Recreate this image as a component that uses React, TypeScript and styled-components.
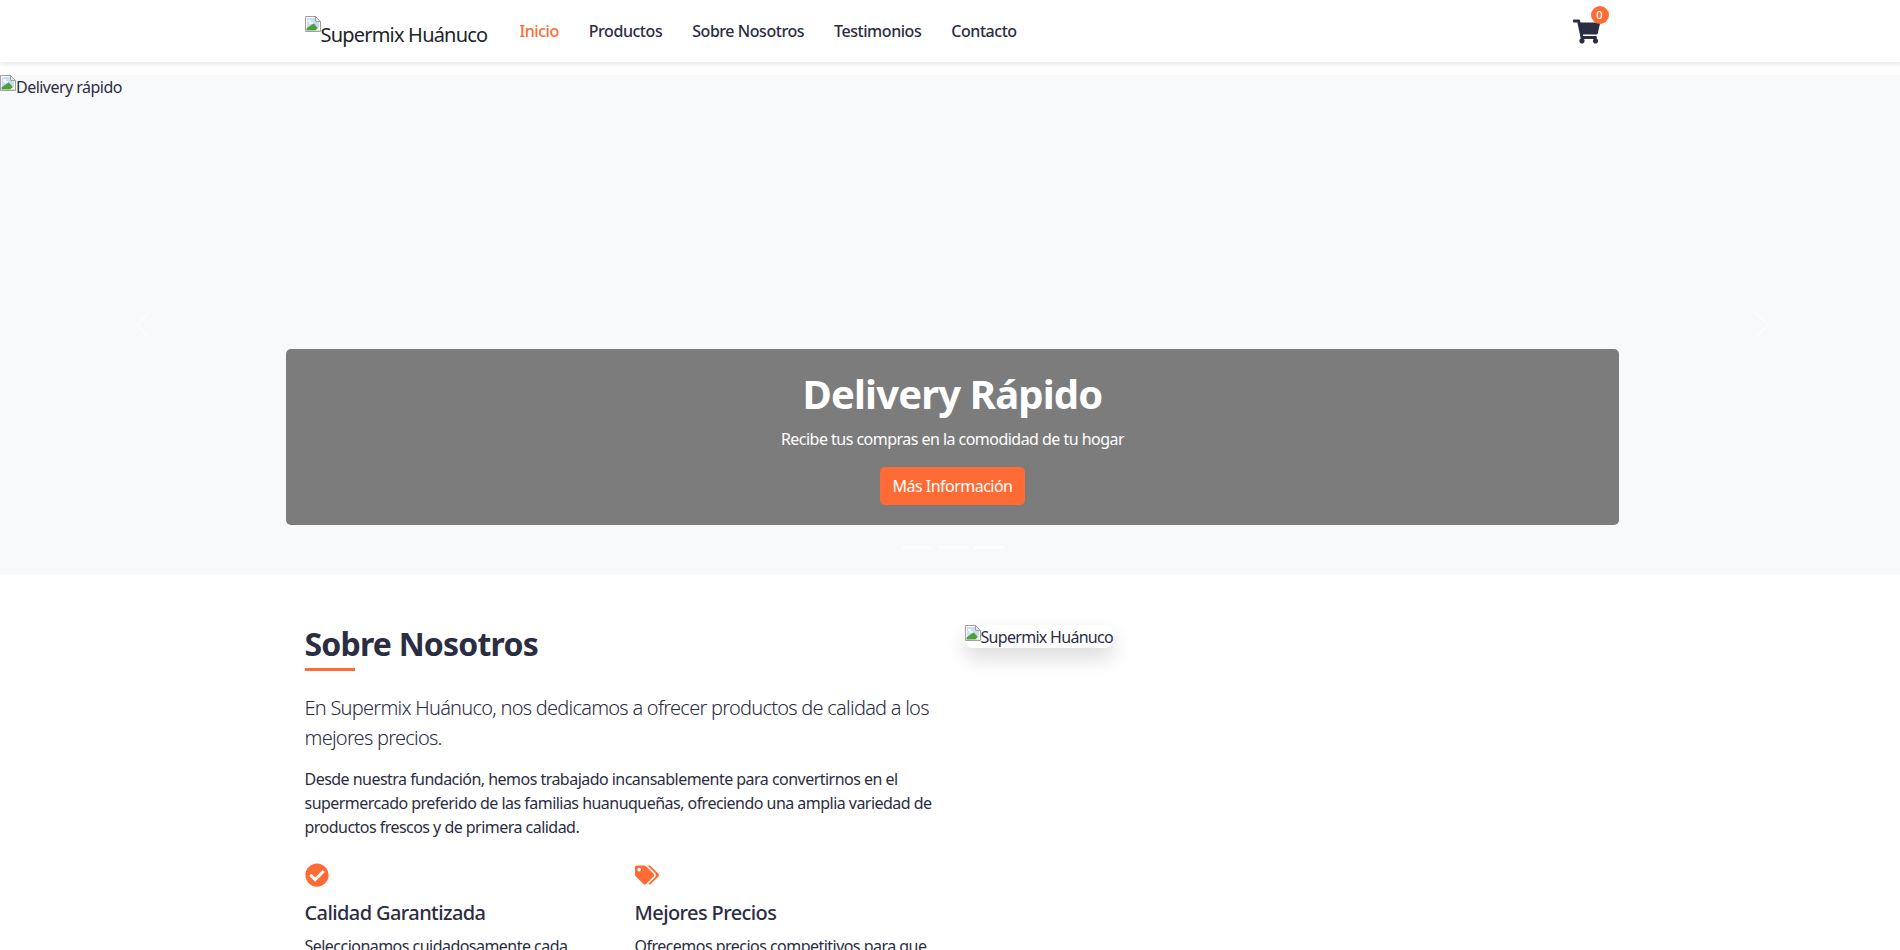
import React from "react";
import styled, {createGlobalStyle} from "styled-components";
import {FaCheckCircle, FaShoppingCart, FaTags} from "react-icons/fa";

const GlobalStyle = createGlobalStyle`
  html, body {
    margin: 0;
    height: 950px;
    overflow: hidden;
    background: #fff;
  }
  * {
    box-sizing: border-box;
  }
`;

const Page = styled.div`
  width: 1905px;
  height: 950px;
  overflow: hidden;
  font-family: "Noto Sans", "Open Sans", sans-serif;
  font-size: 16px;
  line-height: 24px;
  color: #2b2d42;
  letter-spacing: -0.53px;
`;

const Navbar = styled.nav`
  height: 62px;
  background: #fff;
  box-shadow: 0 2px 5px rgba(0, 0, 0, 0.1);
`;

const Container = styled.div`
  width: 1320px;
  margin: 0 auto;
  padding: 0 12px;
`;

const NavInner = styled(Container)`
  display: flex;
  align-items: center;
  height: 62px;
`;

const Brand = styled.a`
  display: flex;
  align-items: flex-start;
  width: 200px;
  height: 30px;
  margin-top: -1px;
  font-size: 20px;
  line-height: 27px;
  letter-spacing: -0.8px;
  color: #212529;
  span {
    margin-top: 5px;
  }
`;

const BrokenIcon = styled.svg`
  flex: none;
  width: 16px;
  height: 16px;
`;

const NavLinks = styled.ul`
  display: flex;
  margin: 0;
  padding: 0;
  list-style: none;
`;

const NavLink = styled.a<{$active?: boolean}>`
  display: block;
  padding: 0 15px;
  font-weight: 500;
  letter-spacing: -0.45px;
  color: ${p => (p.$active ? "#ff6b35" : "#2b2d42")};
`;

const CartButton = styled.a`
  position: relative;
  display: block;
  width: 27px;
  height: 24px;
  margin-left: auto;
  margin-right: 1px;
  font-size: 27px;
  line-height: 0;
  color: #2b2d42;
  svg {
    display: block;
    margin-top: -1px;
  }
`;

const CartBadge = styled.span`
  position: absolute;
  top: -13px;
  left: 18px;
  width: 18px;
  height: 18px;
  border-radius: 50%;
  background: #ff6b35;
  color: #fff;
  font-size: 11px;
  line-height: 18px;
  font-weight: 500;
  letter-spacing: 0;
  text-align: center;
`;

const Hero = styled.section`
  position: relative;
  height: 500px;
  margin-top: 13px;
  background: #f8f9fa;
`;

const HeroAlt = styled.div`
  display: flex;
  align-items: flex-start;
`;

const Arrow = styled.svg<{$side: "left" | "right"}>`
  position: absolute;
  top: 234px;
  ${p => p.$side}: 127px;
  width: 32px;
  height: 32px;
  opacity: 0.5;
`;

const Caption = styled.div`
  position: absolute;
  left: 15%;
  right: 15%;
  bottom: 50px;
  height: 176px;
  padding: 21px 20px 0;
  border-radius: 5px;
  background: rgba(0, 0, 0, 0.5);
  color: #fff;
  text-align: center;
`;

const CaptionTitle = styled.h2`
  margin: 0 0 9px;
  font-size: 40px;
  line-height: 48px;
  font-weight: 700;
  letter-spacing: -0.85px;
`;

const CaptionText = styled.p`
  margin: 0 0 16px;
`;

const CaptionButton = styled.a`
  display: inline-block;
  height: 38px;
  padding: 7px 13px;
  border-radius: 5px;
  background: #ff6b35;
  color: #fff;
`;

const Indicators = styled.div`
  position: absolute;
  left: 0;
  right: 0;
  bottom: 26px;
  display: flex;
  justify-content: center;
  gap: 6px;
`;

const Indicator = styled.span<{$active?: boolean}>`
  width: 30px;
  height: 3px;
  background: #fff;
  opacity: ${p => (p.$active ? 1 : 0.5)};
`;

const About = styled.section`
  padding-top: 50px;
`;

const AboutGrid = styled(Container)`
  display: grid;
  grid-template-columns: 636px 636px;
  column-gap: 24px;
  align-items: start;
`;

const SectionTitle = styled.h2`
  position: relative;
  margin: 0 0 30px;
  font-size: 32px;
  line-height: 38px;
  font-weight: 700;
  letter-spacing: -0.8px;
  &::after {
    content: "";
    position: absolute;
    left: 0;
    bottom: -8px;
    width: 50px;
    height: 3px;
    background: #ff6b35;
  }
`;

const Lead = styled.p`
  margin: 0 0 14px;
  font-size: 20px;
  line-height: 30px;
  font-weight: 300;
  letter-spacing: -0.75px;
`;

const Body = styled.p`
  margin: 0 0 24px;
`;

const Features = styled.div`
  display: grid;
  grid-template-columns: 306px 306px;
  column-gap: 24px;
`;

const FeatureIcon = styled.div`
  height: 24px;
  margin-bottom: 14px;
  font-size: 24px;
  line-height: 24px;
  color: #ff6b35;
`;

const FeatureTitle = styled.h3`
  margin: 0 0 9px;
  font-size: 20px;
  line-height: 24px;
  font-weight: 500;
  letter-spacing: -0.6px;
`;

const FeatureText = styled.p`
  margin: 0;
`;

const AboutImage = styled.div`
  display: inline-flex;
  align-items: flex-start;
  justify-self: start;
  height: 23px;
  border-radius: 8px;
  background: #fff;
  box-shadow: 0 10px 20px rgba(0, 0, 0, 0.15);
  letter-spacing: -0.7px;
  span {
    margin-top: 1px;
    line-height: 23px;
  }
`;

// chrome's broken image placeholder
function BrokenImage() {
  return (
    <BrokenIcon viewBox="0 0 16 16">
      <path d="M0.5 0.5H10.5L15.5 5.5V15.5H0.5Z" fill="#fff" stroke="#a0a0a0" />
      <path d="M2 2H10V6H14V14H2Z" fill="#c9dcf6" />
      <path d="M3 5h3M4 7h4" stroke="#fff" strokeWidth="1.4" />
      <path d="M1.5 14.5V12.5C4 10.5 6.5 8.5 9 7.5L11 10L14.5 14.5Z" fill="#4a9f3a" />
      <path d="M10.5 0.5V5.5H15.5Z" fill="#e8e8e8" stroke="#a0a0a0" />
      <path d="M10 14.5L14.5 11V14.5Z" fill="#fff" />
    </BrokenIcon>
  );
}

const links = ["Inicio", "Productos", "Sobre Nosotros", "Testimonios", "Contacto"];

function App() {
  return (
    <Page>
      <GlobalStyle />
      <Navbar>
        <NavInner>
          <Brand>
            <BrokenImage />
            <span>Supermix Huánuco</span>
          </Brand>
          <NavLinks>
            {links.map((link, i) => (
              <li key={link}>
                <NavLink $active={i === 0}>{link}</NavLink>
              </li>
            ))}
          </NavLinks>
          <CartButton>
            <FaShoppingCart />
            <CartBadge>0</CartBadge>
          </CartButton>
        </NavInner>
      </Navbar>

      <Hero>
        <HeroAlt>
          <BrokenImage />
          <span>Delivery rápido</span>
        </HeroAlt>
        <Arrow $side="left" viewBox="0 0 16 16" fill="#fff">
          <path d="M11.354 1.646a.5.5 0 0 1 0 .708L5.707 8l5.647 5.646a.5.5 0 0 1-.708.708l-6-6a.5.5 0 0 1 0-.708l6-6a.5.5 0 0 1 .708 0z" />
        </Arrow>
        <Arrow $side="right" viewBox="0 0 16 16" fill="#fff">
          <path d="M4.646 1.646a.5.5 0 0 1 .708 0l6 6a.5.5 0 0 1 0 .708l-6 6a.5.5 0 0 1-.708-.708L10.293 8 4.646 2.354a.5.5 0 0 1 0-.708z" />
        </Arrow>
        <Caption>
          <CaptionTitle>Delivery Rápido</CaptionTitle>
          <CaptionText>Recibe tus compras en la comodidad de tu hogar</CaptionText>
          <CaptionButton>Más Información</CaptionButton>
        </Caption>
        <Indicators>
          <Indicator />
          <Indicator />
          <Indicator $active />
        </Indicators>
      </Hero>

      <About>
        <AboutGrid>
          <div>
            <SectionTitle>Sobre Nosotros</SectionTitle>
            <Lead>En Supermix Huánuco, nos dedicamos a ofrecer productos de calidad a los mejores precios.</Lead>
            <Body>
              Desde nuestra fundación, hemos trabajado incansablemente para convertirnos en el supermercado preferido
              de las familias huanuqueñas, ofreciendo una amplia variedad de productos frescos y de primera calidad.
            </Body>
            <Features>
              <div>
                <FeatureIcon>
                  <FaCheckCircle />
                </FeatureIcon>
                <FeatureTitle>Calidad Garantizada</FeatureTitle>
                <FeatureText>Seleccionamos cuidadosamente cada producto para ti.</FeatureText>
              </div>
              <div>
                <FeatureIcon>
                  <FaTags />
                </FeatureIcon>
                <FeatureTitle>Mejores Precios</FeatureTitle>
                <FeatureText>Ofrecemos precios competitivos para que ahorres siempre.</FeatureText>
              </div>
            </Features>
          </div>
          <AboutImage>
            <BrokenImage />
            <span>Supermix Huánuco</span>
          </AboutImage>
        </AboutGrid>
      </About>
    </Page>
  );
}

export default App;
